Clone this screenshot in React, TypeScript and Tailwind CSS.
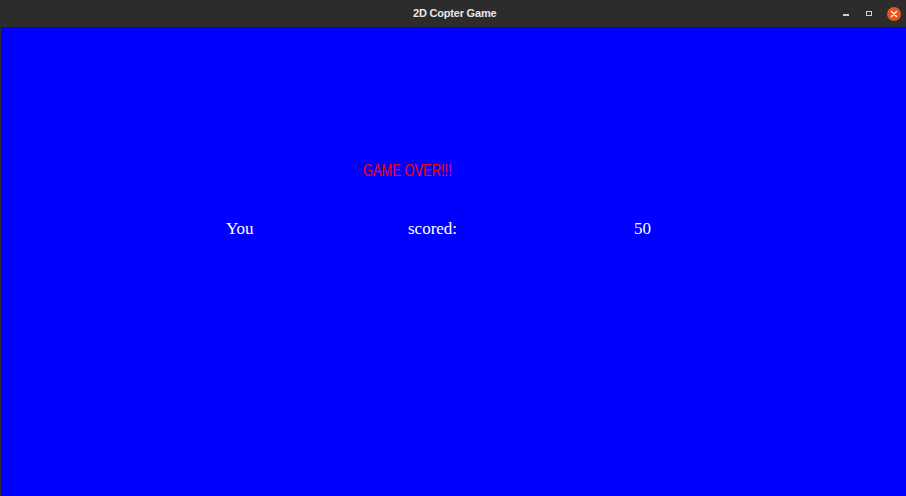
export default function App() {
  return (
    <div className="flex h-[496px] w-[906px] flex-col overflow-hidden bg-[#2c2c2c]">
      {/* window title bar */}
      <div className="flex h-[27px] shrink-0 items-center bg-[#2c2c2c] pl-[413px] pr-[5px]">
        <span className="w-[80px] whitespace-nowrap font-['Liberation_Sans',sans-serif] text-[11px] font-bold tracking-[-0.2px] text-[#e8e8e8]">
          2D Copter Game
        </span>
        <div className="ml-auto flex items-center">
          <span className="mt-[3px] h-[1.5px] w-[6px] bg-[#cfcfcf]" />
          <span className="ml-[17px] mb-[1px] h-[5px] w-[6px] border border-[#cfcfcf]" />
          <span className="ml-[15px] flex h-[14px] w-[14px] items-center justify-center rounded-full bg-[#e95420]">
            <svg width="8" height="8" viewBox="0 0 8 8">
              <path d="M1.5 1.5 L6.5 6.5 M6.5 1.5 L1.5 6.5" stroke="#fff" strokeWidth="1.4" strokeLinecap="round" />
            </svg>
          </span>
        </div>
      </div>

      {/* game canvas */}
      <div className="flex-1 border-l border-[#2c2c2c] bg-[#0000ff]">
        <div className="ml-[362px] mt-[135px] font-['Liberation_Sans',sans-serif] text-[16.5px] leading-none">
          <span className="inline-block origin-left scale-x-[0.78] whitespace-nowrap text-[#ff0000]">
            GAME OVER!!!
          </span>
        </div>
        <div className="ml-[225px] mt-[41px] flex font-['Liberation_Serif',serif] text-[17px] leading-none text-white">
          <span className="w-[182px]">You</span>
          <span className="w-[226px]">scored:</span>
          <span>50</span>
        </div>
      </div>
    </div>
  );
}
